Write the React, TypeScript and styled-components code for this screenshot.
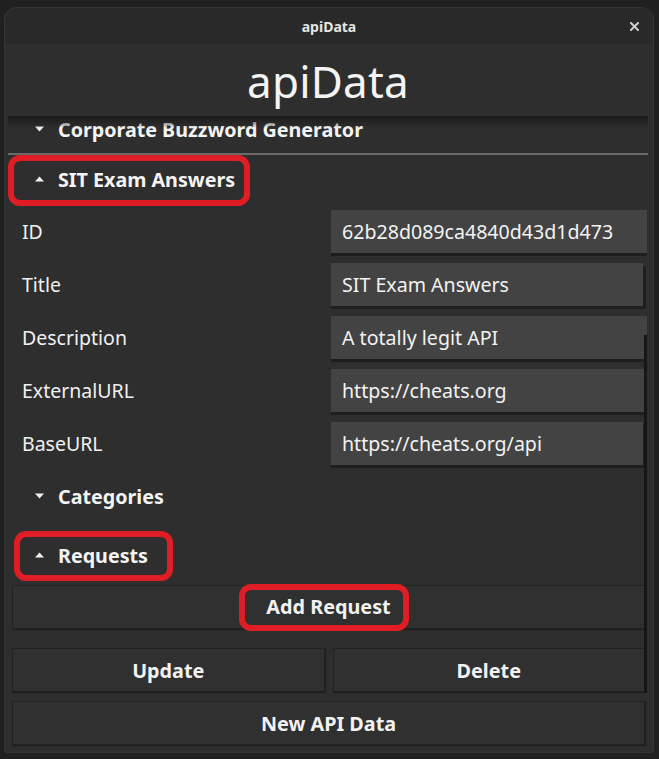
import React from "react";
import styled, { createGlobalStyle } from "styled-components";

const Global = createGlobalStyle`
  html, body { margin: 0; padding: 0; background: #202020; }
  body { font-family: "Noto Sans", "DejaVu Sans", sans-serif; color: #f2f2f2; }
  * { box-sizing: border-box; }
`;

const Page = styled.div`
  width: 659px;
  height: 759px;
  padding: 8px 6px 7px 5px;
  background: #202020;
`;

const Window = styled.div`
  width: 648px;
  height: 744px;
  border-radius: 12px 12px 3px 3px;
  background: #2e2e2e;
  box-shadow: 0 0 0 1px #353535;
  display: flex;
  flex-direction: column;
  overflow: hidden;
`;

const TitleBar = styled.div`
  height: 36px;
  flex: none;
  background: #292929;
  display: flex;
  align-items: center;
  justify-content: center;
  position: relative;
`;

const TitleText = styled.span`
  font-size: 14px;
  font-weight: 700;
  color: #e4e4e4;
`;

const CloseBtn = styled.span`
  position: absolute;
  right: 14px;
  top: 14px;
  width: 9px;
  height: 9px;
  display: flex;
`;

const Body = styled.div`
  flex: 1;
  display: flex;
  flex-direction: column;
  padding: 0 5px 7px 3px;
`;

const Heading = styled.h1`
  margin: 0;
  height: 72px;
  flex: none;
  display: flex;
  align-items: center;
  justify-content: center;
  padding-top: 2px;
  font-size: 44px;
  font-weight: 400;
  color: #f4f4f4;
  letter-spacing: 0.2px;
`;

const Scroll = styled.div`
  position: relative;
  height: 577px;
  flex: none;
  display: flex;
  flex-direction: column;
  &::before {
    content: "";
    position: absolute;
    left: 0;
    right: 0;
    top: 0;
    height: 12px;
    background: linear-gradient(#1b1b1b, rgba(46, 46, 46, 0));
    pointer-events: none;
    z-index: 2;
  }
`;

const ScrollThumb = styled.div`
  position: absolute;
  right: 1px;
  top: 219px;
  bottom: 0;
  width: 3px;
  background: #161616;
  z-index: 3;
`;

const AccordionRow = styled.div<{ $h: number; $shift?: number; $mt?: number }>`
  height: ${(p) => p.$h}px;
  flex: none;
  display: flex;
  align-items: center;
  padding-left: 27px;
  margin-top: ${(p) => p.$mt ?? 0}px;
  padding-bottom: ${(p) => p.$shift ?? 0}px;
`;

const HeaderContent = styled.span<{ $inset?: string }>`
  position: relative;
  display: inline-flex;
  align-items: center;
  gap: 14px;
  height: 26px;
  font-size: 19.7px;
  font-weight: 700;
  color: #f4f4f4;
  &::after {
    content: ${(p) => (p.$inset ? '""' : "none")};
    position: absolute;
    inset: ${(p) => p.$inset ?? "0"};
    border: 6px solid #e01c25;
    border-radius: 12px;
    pointer-events: none;
  }
`;

const Tri = styled.svg`
  width: 9px;
  height: 6px;
  flex: none;
`;

const Separator = styled.div`
  height: 2px;
  flex: none;
  background: #6a6a6a;
`;

const Form = styled.div`
  display: grid;
  grid-template-columns: 309px 316px;
  grid-auto-rows: 43px;
  row-gap: 10px;
  padding: 5px 0 0 14px;
  flex: none;
`;

const Label = styled.div`
  display: flex;
  align-items: center;
  font-size: 19.5px;
  color: #f0f0f0;
`;

const Input = styled.div<{ $edge?: boolean }>`
  display: flex;
  align-items: center;
  padding-left: 11px;
  width: ${(p) => (p.$edge ? "312px" : "316px")};
  background: #434343;
  font-size: 19.6px;
  color: #f2f2f2;
  box-shadow: 0 3px 0 #1e1e1e${(p) => (p.$edge ? ", 3px 3px 0 #1e1e1e" : "")};
`;

const Btn = styled.button`
  position: relative;
  height: 44px;
  flex: 1;
  display: flex;
  align-items: center;
  justify-content: center;
  background: #303030;
  border: 1px solid #222;
  box-shadow: 1px 1px 1px rgba(0, 0, 0, 0.35);
  font-family: inherit;
  font-size: 19.8px;
  font-weight: 700;
  color: #f2f2f2;
  padding: 0;
`;

const BtnText = styled.span<{ $inset?: string }>`
  position: relative;
  line-height: 26px;
  &::after {
    content: ${(p) => (p.$inset ? '""' : "none")};
    position: absolute;
    inset: ${(p) => p.$inset ?? "0"};
    border: 6px solid #e01c25;
    border-radius: 12px;
    pointer-events: none;
  }
`;

const ButtonRow = styled.div<{ $mt: number }>`
  display: flex;
  gap: 8px;
  margin: ${(p) => p.$mt}px 3px 0 4px;
  flex: none;
`;

const Bottom = styled.div`
  display: flex;
  margin: 8px 3px 0 4px;
`;

const Down = () => (
  <Tri viewBox="0 0 9 6">
    <path d="M0 0.5 L9 0.5 L4.5 5.5 Z" fill="#f2f2f2" />
  </Tri>
);
const Up = () => (
  <Tri viewBox="0 0 9 6">
    <path d="M0 5.5 L9 5.5 L4.5 0.5 Z" fill="#f2f2f2" />
  </Tri>
);

const fields: { label: string; value: string; edge?: boolean }[] = [
  { label: "ID", value: "62b28d089ca4840d43d1d473" },
  { label: "Title", value: "SIT Exam Answers", edge: true },
  { label: "Description", value: "A totally legit API" },
  { label: "ExternalURL", value: "https://cheats.org" },
  { label: "BaseURL", value: "https://cheats.org/api", edge: true },
];

export default function App() {
  return (
    <Page>
      <Global />
      <Window>
        <TitleBar>
          <TitleText>apiData</TitleText>
          <CloseBtn>
            <svg width="9" height="9" viewBox="0 0 9 9">
              <path d="M1 1 L8 8 M8 1 L1 8" stroke="#cfcfcf" strokeWidth="2" strokeLinecap="square" />
            </svg>
          </CloseBtn>
        </TitleBar>
        <Body>
          <Heading>apiData</Heading>
          <Scroll>
            <ScrollThumb />
            <AccordionRow $h={37} $shift={11}>
              <HeaderContent>
                <Down />
                Corporate Buzzword Generator
              </HeaderContent>
            </AccordionRow>
            <Separator />
            <AccordionRow $h={50} $shift={2}>
              <HeaderContent $inset="-11px -15px -14px -27px">
                <Up />
                SIT Exam Answers
              </HeaderContent>
            </AccordionRow>
            <Form>
              {fields.map((f) => (
                <React.Fragment key={f.label}>
                  <Label>{f.label}</Label>
                  <Input $edge={f.edge}>{f.value}</Input>
                </React.Fragment>
              ))}
            </Form>
            <AccordionRow $h={50} $mt={6}>
              <HeaderContent>
                <Down />
                Categories
              </HeaderContent>
            </AccordionRow>
            <AccordionRow $h={50} $mt={9}>
              <HeaderContent $inset="-11px -25px -13px -21px">
                <Up />
                Requests
              </HeaderContent>
            </AccordionRow>
            <ButtonRow $mt={5}>
              <Btn>
                <BtnText $inset="-10px -18px -11px -27px">Add Request</BtnText>
              </Btn>
            </ButtonRow>
            <ButtonRow $mt={19}>
              <Btn>Update</Btn>
              <Btn>Delete</Btn>
            </ButtonRow>
          </Scroll>
          <Bottom>
            <Btn>New API Data</Btn>
          </Bottom>
        </Body>
      </Window>
    </Page>
  );
}
